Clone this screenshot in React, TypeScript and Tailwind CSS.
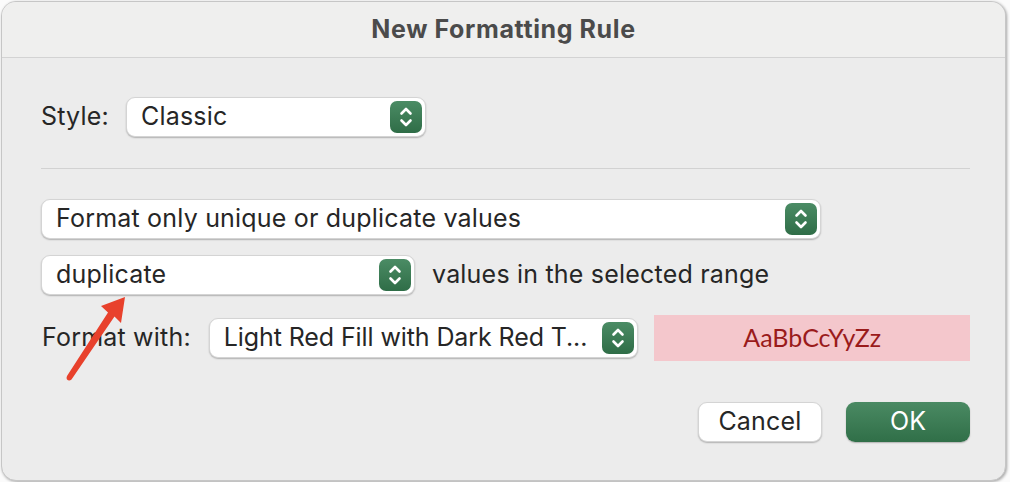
import React from "react";

const font = { fontFamily: "Inter, 'Noto Sans', sans-serif" };

function Stepper() {
  return (
    <div className="w-[32px] h-[32px] rounded-[7px] bg-gradient-to-b from-[#4b8c65] to-[#2f6d47] flex items-center justify-center shrink-0">
      <svg width="16" height="22" viewBox="0 0 16 22" fill="none" stroke="white" strokeWidth="2.6" strokeLinecap="round" strokeLinejoin="round">
        <path d="M3.5 7.5 L8 3 L12.5 7.5" />
        <path d="M3.5 14.5 L8 19 L12.5 14.5" />
      </svg>
    </div>
  );
}

function Select({ label, className, tight }: { label: string; className: string; tight?: boolean }) {
  return (
    <div
      className={`h-[40px] bg-white rounded-[9px] border-[0.5px] border-[#d4d4d4] shadow-[0_1px_1.5px_rgba(0,0,0,0.25)] flex items-center pl-[14px] pr-[3px] ${className}`}
    >
      <span
        className={`flex-1 text-[25px] text-[#262626] whitespace-nowrap overflow-hidden ${
          tight ? "tracking-[-0.1px]" : "tracking-[0.2px]"
        }`}
      >
        {label}
      </span>
      <Stepper />
    </div>
  );
}

export default function App() {
  return (
    <div className="w-[1010px] h-[482px] bg-[#fbfbfb] relative" style={font}>
      <div className="absolute left-[1px] top-[1px] w-[1005px] h-[480px] rounded-[15px] border border-[#c6c6c6] bg-[#ececec] shadow-[1px_1px_3px_rgba(0,0,0,0.35)] overflow-hidden flex flex-col">
        <div className="h-[56px] shrink-0 bg-[#efefee] border-b border-[#d3d3d3] flex items-center justify-center">
          <span className="text-[25px] font-bold text-[#4b4b4b] tracking-[0.6px]">New Formatting Rule</span>
        </div>
        <div className="flex flex-col pl-[39px] pr-[35px]">
          <div className="flex items-center mt-[39px]">
            <span className="text-[25px] tracking-[0.2px] text-[#262626] w-[85px]">Style:</span>
            <Select label="Classic" className="w-[300px]" />
          </div>
          <div className="h-[1px] bg-[#d2d2d2] mt-[31px]" />
          <Select label="Format only unique or duplicate values" className="w-[780px] mt-[30px]" />
          <div className="flex items-center mt-[16px]">
            <Select label="duplicate" className="w-[374px]" />
            <span className="text-[25px] tracking-[0.2px] text-[#262626] ml-[17px]">values in the selected range</span>
          </div>
          <div className="flex items-center mt-[20px]">
            <span className="text-[25px] tracking-[0.2px] text-[#262626] w-[168px] pl-[1px]">Format with:</span>
            <Select label="Light Red Fill with Dark Red T..." className="w-[430px]" tight />
            <div className="ml-[16px] w-[316px] h-[46px] bg-[#f4c7cc] flex items-center justify-center">
              <span className="text-[25px] text-[#9a1b1b]" style={{ fontFamily: "Lato, 'Noto Sans', sans-serif" }}>
                AaBbCcYyZz
              </span>
            </div>
          </div>
          <div className="flex justify-end gap-[24px] mt-[41px]">
            <button className="w-[124px] h-[40px] bg-white rounded-[9px] border-[0.5px] border-[#d4d4d4] shadow-[0_1px_1.5px_rgba(0,0,0,0.25)] text-[25px] tracking-[0.2px] text-[#262626]">
              Cancel
            </button>
            <button className="w-[124px] h-[40px] rounded-[9px] bg-gradient-to-b from-[#4a8a63] to-[#306f48] shadow-[0_1px_1.5px_rgba(0,0,0,0.25)] text-[25px] text-white">
              OK
            </button>
          </div>
        </div>
      </div>
      <svg className="absolute left-0 top-0 pointer-events-none" width="1010" height="482" viewBox="0 0 1010 482">
        <path
          d="M125 297 L121 323 L114.5 316.5 L71.5 379.5 Q69 381.5 67 379.5 Q66 378 67 376 L108 312.5 L101 306 Z"
          fill="#e8412c"
        />
      </svg>
    </div>
  );
}
